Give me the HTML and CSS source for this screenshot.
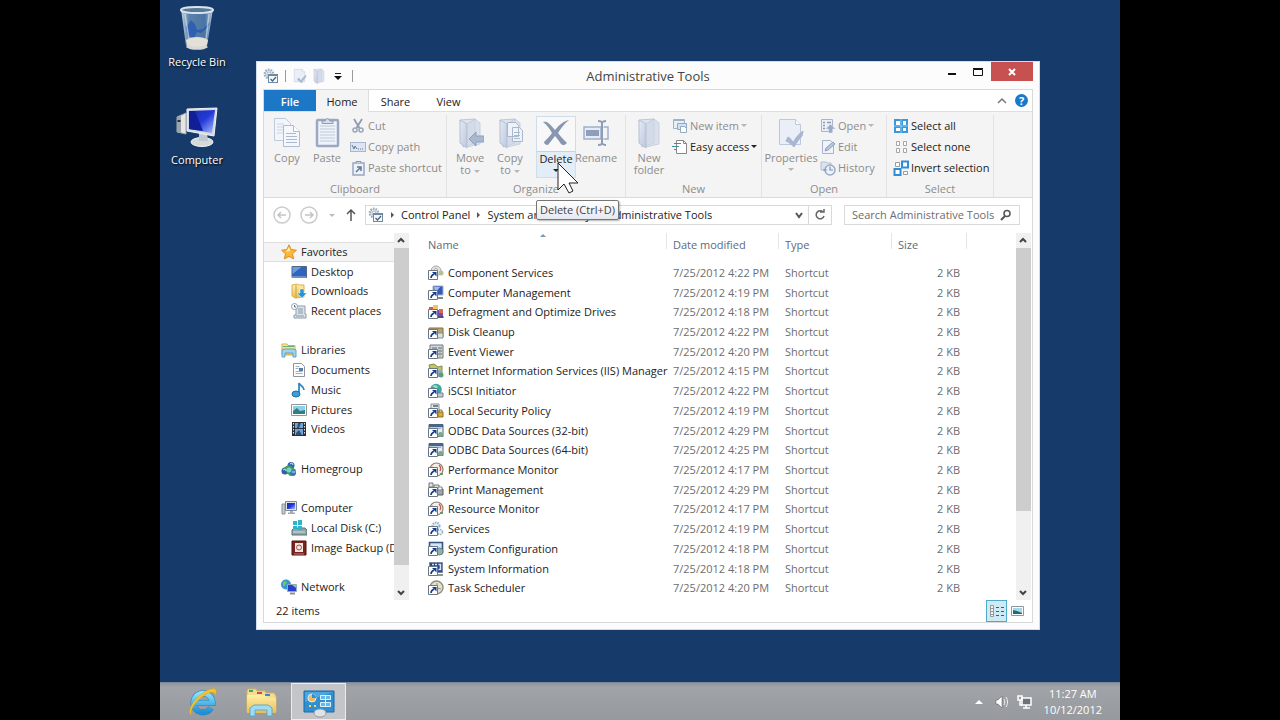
FILE: index.html
```html
<!DOCTYPE html>
<html lang="en">
<head>
    <meta charset="UTF-8">
    <meta name="viewport" content="width=device-width, initial-scale=1.0">
    <title>Administrative Tools</title>
    <link rel="stylesheet" href="styles.css">
</head>
<body>
    <!-- Icon sprite -->
    <svg class="sprite" aria-hidden="true">
        <defs>
            <linearGradient id="gFolder" x1="0" y1="0" x2="1" y2="1"><stop offset="0" stop-color="#e6ebf4"/><stop offset="1" stop-color="#bcc7dc"/></linearGradient>
            <linearGradient id="gBlue" x1="0" y1="0" x2="1" y2="1"><stop offset="0" stop-color="#1a2fa0"/><stop offset=".5" stop-color="#2438d8"/><stop offset="1" stop-color="#a9c4ff"/></linearGradient>
            <linearGradient id="gGlass" x1="0" y1="0" x2="1" y2="0"><stop offset="0" stop-color="#c4d4e2"/><stop offset=".25" stop-color="#5a82ab"/><stop offset=".75" stop-color="#4a74a3"/><stop offset="1" stop-color="#b5c9da"/></linearGradient>
            <linearGradient id="gGold" x1="0" y1="0" x2="0" y2="1"><stop offset="0" stop-color="#fff0a8"/><stop offset="1" stop-color="#e9bd50"/></linearGradient>
            <linearGradient id="gIe" x1="0" y1="0" x2="0" y2="1"><stop offset="0" stop-color="#8be0fb"/><stop offset="1" stop-color="#1f8fd8"/></linearGradient>
        </defs>

        <symbol id="gears" viewBox="0 0 16 16">
            <circle cx="6" cy="6" r="4.2" fill="#e8edf2" stroke="#9dacbb" stroke-width="2.4" stroke-dasharray="1.6 1"/>
            <circle cx="6" cy="6" r="2" fill="#fff" stroke="#a5b4c3"/>
            <rect x="5.500" y="6.500" width="9" height="8" fill="#f4f8fb" stroke="#7089a0"/>
            <path d="M5 7.500h10" stroke="#7089a0"/>
            <path d="M7.500 11l2 2 3.500-4" fill="none" stroke="#466681" stroke-width="1.300"/>
        </symbol>
        <symbol id="props" viewBox="0 0 28 32">
            <path d="M2.500 2.500h16l5 5v20h-21z" fill="#e9eef7" stroke="#bdc8da"/>
            <path d="M18.500 2.500v5h5" fill="#fff" stroke="#bdc8da"/>
            <path d="M11 20c2 1 4 3 5 6 3-6 6-9 10-12l-1 5c-3 3-6 7-8 11-2-2-5-5-8-6z" fill="#a9b8d2" stroke="#a3b3cf"/>
        </symbol>
        <symbol id="folder" viewBox="0 0 28 32">
            <path d="M4 3l15-1v24l-12 4z" fill="#dde4ef" stroke="#bcc7d9"/>
            <path d="M4 3l7 4v24l-7-5z" fill="url(#gFolder)" stroke="#b5c1d5"/>
            <path d="M19 2l5 4v21l-13 3V7z" fill="#cfd8e7" opacity=".7" stroke="#b8c3d6"/>
        </symbol>
        <symbol id="copy" viewBox="0 0 28 32">
            <path d="M1.500 1.500h11l5 5v17h-16z" fill="#f2f5fa" stroke="#bfcadb"/>
            <path d="M4 7h7M4 10h7M4 13h7M4 16h7" stroke="#cbd4e3"/>
            <path d="M10.500 8.500h10l6 6v15h-16z" fill="#f4f7fb" stroke="#aebcd1"/>
            <path d="M20.500 8.500v6h6" fill="#fff" stroke="#aebcd1"/>
            <path d="M13 16.500h10M13 19.500h11M13 22.500h11M13 25.500h11" stroke="#aab8d2"/>
        </symbol>
        <symbol id="paste" viewBox="0 0 28 32">
            <rect x="4" y="3" width="21" height="26" rx="1" fill="#eff3f9" stroke="#99a9c4" stroke-width="2.500"/>
            <path d="M7 9h15M7 12h15M7 15h15M7 18h15M7 21h15M7 24h15" stroke="#bdc9db"/>
            <path d="M9 6.500V4h3l2.500-3L17 4h3v2.500z" fill="#d7deea" stroke="#8d9db7"/>
        </symbol>
        <symbol id="cut" viewBox="0 0 16 16">
            <path d="M4 1l5.500 9M12 1L6.500 10" stroke="#8f9bb0" stroke-width="1.800"/>
            <circle cx="5" cy="12" r="2" fill="none" stroke="#98a4b8" stroke-width="1.500"/>
            <circle cx="11" cy="12" r="2" fill="none" stroke="#98a4b8" stroke-width="1.500"/>
        </symbol>
        <symbol id="path" viewBox="0 0 16 16">
            <rect x=".5" y="3.500" width="15" height="9" fill="#dce5f1" stroke="#a9b7cd"/>
            <path d="M2 6l2 4 1-3 2 3M8 10h1M10 10h1M12 10h1" fill="none" stroke="#677a9c"/>
        </symbol>
        <symbol id="pasteshort" viewBox="0 0 16 16">
            <rect x="3" y="3" width="11" height="12" fill="#eef2f8" stroke="#97a7c2" stroke-width="1.500"/>
            <path d="M6 3V1.500h5V3" fill="#cdd6e4" stroke="#8797b2"/>
            <path d="M6 12l4-4M7 7h4v4" fill="none" stroke="#5f7598" stroke-width="1.500"/>
        </symbol>
        <symbol id="moveto" viewBox="0 0 28 32">
            <use href="#folder"/>
            <path d="M13 22l7-7v4h8v6h-8v4z" fill="#a9b7cf" stroke="#8fa0bd"/>
        </symbol>
        <symbol id="copyto" viewBox="0 0 28 32">
            <use href="#folder"/>
            <path d="M11.500 5.500h8l3 3v11h-11zM16.500 10.500h7l3 3v11h-10z" fill="#eff3f9" stroke="#a9b7cf"/>
            <path d="M18 15.500h6M18 18.500h6M18 21.500h6" stroke="#a9b7cf"/>
        </symbol>
        <symbol id="delete" viewBox="0 0 28 32">
            <path d="M1 5c4-1 6 1 12 8C18 7 22 4 27 3c-5 4-8 8-11 13 4 5 7 8 9 10-2 2-4 3-6 1-2-3-4-6-6-8-3 4-5 6-7 9-2 0-4-1-4-3 3-3 6-6 8-9C7 11 5 8 1 5z" fill="#8797b2"/>
        </symbol>
        <symbol id="rename" viewBox="0 0 28 32">
            <path d="M2 10h17v12H2z" fill="#e6ecf5" stroke="#9fb0c9" stroke-width="1.500"/>
            <path d="M4 13h13v6H4z" fill="#8d9fbd"/>
            <path d="M21.500 10h4.500v12h-4.500" fill="none" stroke="#9fb0c9" stroke-width="1.500"/>
            <path d="M16 4c3 0 4 1 4 2 0-1 2-2 4-2M20 5v22M16 28c3 0 4-1 4-2 0 1 2 2 4 2" fill="none" stroke="#8d9db8" stroke-width="2"/>
        </symbol>
        <symbol id="newitem" viewBox="0 0 16 16">
            <path d="M1.500 1.500h11v9h-11z" fill="#e6f0f8" stroke="#9bb3cc"/><path d="M1 2.500h11" stroke="#9bb3cc"/>
            <path d="M5.500 5.500h9v6h-9z" fill="#d4e2ef" stroke="#8fa9c4"/>
            <path d="M8.500 8.500h4l2 2v4h-6z" fill="#fff" stroke="#93a9c2"/>
        </symbol>
        <symbol id="easy" viewBox="0 0 16 16">
            <path d="M4.500 1.500h7l3 3v10h-10z" fill="#fff" stroke="#888"/><path d="M11.500 1.500v3h3" fill="none" stroke="#888"/>
            <path d="M2 4.500h7M0 7.500h7M2 10.500h3" stroke="#3f8f9d" stroke-width="1.200"/>
        </symbol>
        <symbol id="open" viewBox="0 0 16 16">
            <path d="M1.500 1.500h11v12h-11z" fill="#eef2f8" stroke="#a7b4cb"/>
            <path d="M3 4.500h2M3 7.500h2M3 10.500h2M7 4.500h4" stroke="#8b9bb9" stroke-width="1.500"/>
            <path d="M10.500 6l5 5h-3v4H8.500v-4h-3z" fill="#9babc7" stroke="#e8edf5" stroke-width=".5"/>
        </symbol>
        <symbol id="edit" viewBox="0 0 16 16">
            <path d="M2.500 1.500h8l3 3v10h-11z" fill="#f0f4fa" stroke="#a7b4cb"/>
            <path d="M5 12l1-3 7-6 2 2-7 6z" fill="#b8c6dc" stroke="#8fa0bf"/>
        </symbol>
        <symbol id="history" viewBox="0 0 16 16">
            <path d="M1 2h5l1 1h4v7H1z" fill="#dbe3ef" stroke="#b3c0d5"/>
            <circle cx="10" cy="10" r="5" fill="#eef2f8" stroke="#9aabc7" stroke-width="1.500"/>
            <path d="M10 6.500V10h3M3 10h4" fill="none" stroke="#7c8fb0" stroke-width="1.200"/>
        </symbol>
        <symbol id="selall" viewBox="0 0 16 16">
            <path d="M1 1h14v14H1z" fill="#3b97dc"/><path d="M8 1v14M1 8h14" stroke="#8cc5ef"/>
            <path d="M3 3h4v4H3zM10 3h3v4h-3zM3 10h4v3H3zM10 10h3v3h-3z" fill="#fff"/>
        </symbol>
        <symbol id="selnone" viewBox="0 0 16 16">
            <path d="M3.500 2.500h3v4h-3zM10.500 2.500h3v4h-3zM3.500 9.500h3v4h-3zM10.500 9.500h3v4h-3z" fill="#fff" stroke="#a5a5a5"/>
        </symbol>
        <symbol id="selinv" viewBox="0 0 16 16">
            <path d="M2.500 2.500h4v4h-4zM10.500 11.500h4v3h-4z" fill="#fff" stroke="#9a9a9a"/>
            <path d="M9 1.500h6v6H9zM1.500 9h6v6h-6z" fill="#fff" stroke="#2f8ed6" stroke-width="2"/>
        </symbol>

        <symbol id="star" viewBox="0 0 16 16"><path d="M8 .8l2.200 4.800 5.200.6-3.900 3.500 1.100 5.200L8 12.300l-4.600 2.600 1.100-5.200L.6 6.200l5.200-.6z" fill="#fbb83a" stroke="#dd8d1d"/><path d="M8 3l1.200 3.600L5 8z" fill="#fff2b8"/></symbol>
        <symbol id="desk" viewBox="0 0 16 16"><path d="M1 2.500h14.500v11H1z" fill="#2f65bd" stroke="#54657d"/><path d="M1.500 3h9L1.500 10z" fill="#6d9ce0"/><path d="M1 13h14" stroke="#a8b9cc"/></symbol>
        <symbol id="down" viewBox="0 0 16 16"><path d="M1 2l5-1 2 1h5v12l-9 1-3-2z" fill="url(#gGold)" stroke="#d8b153"/><path d="M5 2v13" stroke="#caa24a"/><path d="M9 6h4v4h3l-5 5-5-5h3z" fill="#2a93dc" stroke="#fff" stroke-width=".5"/></symbol>
        <symbol id="recent" viewBox="0 0 16 16"><path d="M5 3h9v8h1v4H3v-3h2z" fill="#dce4ea" stroke="#8d9ba7"/><path d="M7 6h5M7 8h5M7 10h5M5 13h8" stroke="#8498a8"/><circle cx="3.500" cy="3.500" r="3" fill="#fff" stroke="#90a0ac"/><path d="M3.500 2v2h1.500" fill="none" stroke="#5d7080"/></symbol>
        <symbol id="lib" viewBox="0 0 16 16"><path d="M1 2h5l1 1.500h7V13H1z" fill="url(#gGold)" stroke="#d3ae57"/><path d="M2 4.500h11" stroke="#68b06a"/><path d="M1 15V8l3-1h8l3 1v7h-3v-4H4v4z" fill="#9fd3ee" stroke="#5ca5c8"/></symbol>
        <symbol id="doc" viewBox="0 0 16 16"><path d="M2.500 1.500h8l3 3v10h-11z" fill="#fff" stroke="#8e959c"/><path d="M4.500 4.500h4M4.500 6.500h3M4.500 9.500h7M4.500 11.500h7" stroke="#9cb0c4"/><path d="M8 6h4v3H8z" fill="#547da8"/></symbol>
        <symbol id="music" viewBox="0 0 16 16"><path d="M8 12V1c1 3 5 3 5 7" fill="none" stroke="#2d8bc4" stroke-width="1.800"/><ellipse cx="5" cy="12" rx="4" ry="3" fill="#3a9fd8" stroke="#1f6fa5"/></symbol>
        <symbol id="pic" viewBox="0 0 16 16"><path d="M.5 2.500h15v11H.5z" fill="#fff" stroke="#8e979e"/><path d="M2 4h12v8H2z" fill="#8fd0e6"/><path d="M2 9l4-3 3 3 5-1v4H2z" fill="#2c7f86"/></symbol>
        <symbol id="video" viewBox="0 0 16 16"><path d="M1 1h14v14H1z" fill="#2a3036"/><path d="M4 2h8v5H4zM4 8h8v6H4z" fill="#6ea6dd"/><path d="M7 2h3l-2 5H6zM5 12l3-3 3 5H5z" fill="#34526f"/><path d="M2.500 2v12M13.500 2v12" stroke="#e4e4e4" stroke-dasharray="1.500 1.500"/></symbol>
        <symbol id="home" viewBox="0 0 16 16"><circle cx="4" cy="10" r="3.500" fill="#2d5fae"/><circle cx="10" cy="4.500" r="3.500" fill="#2f66b4"/><path d="M3 7c3-3 5-3 8-1l4 3-2 5-4 1-3-3z" fill="#3f9e57"/><circle cx="12" cy="12" r="3" fill="#3578b5"/><circle cx="8" cy="9" r="2.500" fill="#74d3cf"/><path d="M9 3l2-1 1 2M2 9l2-1 1 2M11 11h3" fill="none" stroke="#bfe4f0"/></symbol>
        <symbol id="pc" viewBox="0 0 16 16"><path d="M1 4h3v10H1z" fill="#c5ccd3" stroke="#88929b"/><path d="M4.500 1.500h11v9h-11z" fill="#dfe4ea" stroke="#7f8a96"/><path d="M6 3h8v6H6z" fill="url(#gBlue)"/><path d="M9 11h3v1.500H14V14H7v-1.500h2z" fill="#a4adb6"/></symbol>
        <symbol id="disk" viewBox="0 0 16 16"><path d="M1 10l2-2h11l2 2v5H1z" fill="#8fa4a8" stroke="#5e7377"/><path d="M2 12h12" stroke="#d4e1e3"/><path d="M13 13h2" stroke="#42e35c"/><path d="M2 1h4v4H2zM7 0h4v5H7zM2 6h4v3H2zM7 6h4v4H7z" fill="#27b5cf"/></symbol>
        <symbol id="image" viewBox="0 0 16 16"><path d="M1 1h14v14H1z" fill="#7a2420" stroke="#51120f"/><path d="M4 3h8v9H4z" fill="#f7e5df"/><circle cx="8" cy="7.500" r="2.500" fill="none" stroke="#a44e45"/><path d="M3 14h10" stroke="#c27b73"/></symbol>
        <symbol id="net" viewBox="0 0 16 16"><circle cx="5" cy="5.500" r="5" fill="#3498cf"/><path d="M2 3c3-2 5 0 3 2s-1 3-3 2z" fill="#6cc56f"/><path d="M6.500 5.500h9v7h-9z" fill="#2540c9" stroke="#9da8b6"/><path d="M11 6h4v3z" fill="#8ab1ff"/><path d="M9 14.500h5" stroke="#87919b" stroke-width="2"/></symbol>

        <!-- Shortcut arrow laid over every tool icon -->
        <symbol id="arrow" viewBox="0 0 16 16">
            <path d="M.5 5.500h9v9h-9z" fill="#fff" stroke="#6c7680"/>
            <path d="M3 13c0-2 1-3 3-4" fill="none" stroke="#173c8c" stroke-width="1.600"/>
            <path d="M4 7h4.500v4.500z" fill="#173c8c"/>
        </symbol>
        <symbol id="t-comp" viewBox="0 0 16 16"><circle cx="8" cy="6" r="5" fill="#e4e4dc" stroke="#a5a9a5"/><circle cx="8" cy="5" r="1.500" fill="#fff" stroke="#aaa"/><circle cx="13" cy="8" r="2.500" fill="#b4c096"/><use href="#arrow"/></symbol>
        <symbol id="t-mgmt" viewBox="0 0 16 16"><path d="M5 1h10v9H5z" fill="#3558bd" stroke="#a3b2cf"/><path d="M6 2h6L7 8z" fill="#9dbbf4"/><path d="M9 13h6" stroke="#7d8996" stroke-width="2"/><use href="#arrow"/></symbol>
        <symbol id="t-defrag" viewBox="0 0 16 16"><path d="M1 3h5v4H1z" fill="#d95745"/><path d="M5 1h5v5H5z" fill="#f1c55b"/><path d="M8 6h7v8H8z" fill="#7250a4"/><path d="M11 5h4v4h-4z" fill="#d96956"/><path d="M10 13h6" stroke="#444"/><use href="#arrow"/></symbol>
        <symbol id="t-clean" viewBox="0 0 16 16"><path d="M1 4h14v9H1z" fill="#b9a369" stroke="#837143"/><path d="M9 9h6v5H9z" fill="#dbe1de" stroke="#7f9386"/><use href="#arrow"/></symbol>
        <symbol id="t-event" viewBox="0 0 16 16"><path d="M2 1h13v13H2z" fill="#d3d8dc" stroke="#6c7884"/><path d="M4 4h5M10 4h4M10 7h4M10 10h4" stroke="#456d91"/><path d="M12 3v10" stroke="#b19d67"/><use href="#arrow"/></symbol>
        <symbol id="t-iis" viewBox="0 0 16 16"><path d="M1 2l5-1 4 3 4-1v10H4z" fill="#c4c65d" stroke="#858d49"/><path d="M9 7h5v7H9z" fill="#93abc2"/><circle cx="13" cy="12" r="2.500" fill="#5a9f6f"/><use href="#arrow"/></symbol>
        <symbol id="t-iscsi" viewBox="0 0 16 16"><circle cx="8" cy="6.500" r="5.800" fill="#3da6a6"/><path d="M4 3c4-2 7 0 5 3z" fill="#9de2b0"/><path d="M9 10h6v4H9z" fill="#c0c9cc" stroke="#718189"/><use href="#arrow"/></symbol>
        <symbol id="t-sec" viewBox="0 0 16 16"><path d="M3 1h8v12H3z" fill="#e5e9ed" stroke="#85919c"/><path d="M5 3h5" stroke="#51606f" stroke-width="1.500"/><path d="M10 9h5v5h-5z" fill="#d9ad37" stroke="#93701e"/><path d="M11 9V7h3v2" fill="none" stroke="#83735b"/><use href="#arrow"/></symbol>
        <symbol id="t-odbc" viewBox="0 0 16 16"><path d="M1 1.500h14v12H1z" fill="#e7edf2" stroke="#536579"/><path d="M1 3h14" stroke="#43678e" stroke-width="2.500"/><path d="M4 5.500h9" stroke="#9db1c2"/><circle cx="12.500" cy="11.500" r="2.500" fill="#77a888"/><use href="#arrow"/></symbol>
        <symbol id="t-perf" viewBox="0 0 16 16"><circle cx="8.500" cy="7.500" r="6.500" fill="#f6eee9" stroke="#89826f" stroke-width="1.200"/><path d="M4 5l5 4M11 3c2 2 2 4 1 6" fill="none" stroke="#cf5549" stroke-width="1.300"/><path d="M12 12h3" stroke="#669a6b" stroke-width="2"/><use href="#arrow"/></symbol>
        <symbol id="t-print" viewBox="0 0 16 16"><path d="M1 1h4v4H1zM6 3h5v4H6z" fill="#dfe3e6" stroke="#71787d"/><path d="M7 7h8v6H7z" fill="#9ca8ab" stroke="#545e62"/><path d="M10 5h4v3h-4z" fill="#fff" stroke="#7a8485"/><use href="#arrow"/></symbol>
        <symbol id="t-serv" viewBox="0 0 16 16"><circle cx="8" cy="5" r="3.500" fill="#dfeef8" stroke="#8db1ca" stroke-width="2" stroke-dasharray="1.500 1"/><circle cx="12" cy="11" r="2.500" fill="#e9f3f9" stroke="#8fa9bb" stroke-width="1.600" stroke-dasharray="1.300 1"/><use href="#arrow"/></symbol>
        <symbol id="t-conf" viewBox="0 0 16 16"><path d="M1.500 1.500h13v10h-13z" fill="#d1e4fa" stroke="#35547f" stroke-width="1.600"/><circle cx="11.500" cy="10.500" r="3.500" fill="#94b698" stroke="#5f7d8f"/><use href="#arrow"/></symbol>
        <symbol id="t-info" viewBox="0 0 16 16"><path d="M1.500 1.500h13v10h-13z" fill="#24469b" stroke="#7c8797"/><path d="M4 3.500h2M7 3.500h2M10.500 3.500h2v5h-2" fill="none" stroke="#d6e4ff" stroke-width="1.500"/><path d="M9 14h6" stroke="#8b949d" stroke-width="2"/><use href="#arrow"/></symbol>
        <symbol id="t-task" viewBox="0 0 16 16"><circle cx="8.500" cy="7.500" r="6.500" fill="#e8e1ca" stroke="#8b8e83" stroke-width="1.400"/><path d="M9 3v5l4 1" fill="none" stroke="#89958f"/><use href="#arrow"/></symbol>
    </svg>

    <div class="desktop">
        <div class="shortcuts">
            <a href="#" class="shortcut">
                <svg viewBox="0 0 40 48" width="40" height="48">
                    <path d="M4 4l5 37c1 3 19 3 21 0l6-37z" fill="url(#gGlass)"/>
                    <path d="M9 22l5-7 4 4 2 6 6-1 7-7-2 5-7 6-4-1-3 6-6-2z" fill="#2456b4" opacity=".75"/>
                    <path d="M9 35c5-4 17-4 22 0l-1 5c-4 3-16 3-20 0z" fill="#e4dfd7"/>
                    <ellipse cx="20" cy="5" rx="16" ry="3" fill="#567899" stroke="#dbe4eb" stroke-width="2"/>
                    <path d="M10 41c4 3 16 3 20 0" stroke="#d5d9db" stroke-width="3" fill="none"/>
                    <path d="M8 9l4 25M32 9l-3 25" stroke="#dce9f3" stroke-width="1.500" opacity=".6"/>
                </svg>
                <span>Recycle Bin</span>
            </a>
            <a href="#" class="shortcut">
                <svg viewBox="0 0 48 48" width="48" height="48">
                    <path d="M4 14l9-4v21l-9-2z" fill="#e5e6e4" stroke="#a4a8aa"/>
                    <path d="M4 14l4-1v17l-4-1z" fill="#9ba3ab"/><path d="M4.500 18h3" stroke="#27333c" stroke-width="2"/>
                    <ellipse cx="29" cy="39" rx="11" ry="4.500" fill="#d4d9dc" stroke="#f5f5f5"/>
                    <path d="M26 30h8l1 8h-9z" fill="#c0c8cf"/>
                    <path d="M14 6l30-1-3 28-27-5z" fill="#d3dae1" stroke="#f0f3f5"/>
                    <path d="M16 8l26-1-3 23-23-4z" fill="url(#gBlue)"/>
                    <path d="M16 8h6l8 20-14-2z" fill="#101e98"/>
                </svg>
                <span>Computer</span>
            </a>
        </div>

        <div class="window">
            <header class="titlebar">
                <div class="quick-access">
                    <svg class="icon"><use href="#gears"/></svg>
                    <i class="divider"></i>
                    <button class="icon-btn" aria-label="Properties"><svg class="icon"><use href="#props"/></svg></button>
                    <button class="icon-btn" aria-label="New folder"><svg class="icon"><use href="#folder"/></svg></button>
                    <button class="icon-btn" aria-label="Customize toolbar"><svg width="8" height="8" viewBox="0 0 8 8"><path d="M1 1.500h6" stroke="#222"/><path d="M0 4h8L4 8z" fill="#111"/></svg></button>
                    <i class="divider"></i>
                </div>
                <h1>Administrative Tools</h1>
                <div class="window-controls">
                    <button class="win-btn" aria-label="Minimize"><svg width="10" height="10"><path d="M1 7h8" stroke="#111" stroke-width="2"/></svg></button>
                    <button class="win-btn" aria-label="Maximize"><svg width="10" height="10"><path d="M.5 2.500h9v6h-9zM0 1.500h10" fill="none" stroke="#111"/></svg></button>
                    <button class="win-btn close" aria-label="Close"><svg width="10" height="10"><path d="M2 2l6 6M8 2L2 8" stroke="#fff" stroke-width="2"/></svg></button>
                </div>
            </header>

            <div class="frame">
                <nav class="tabs">
                    <button class="tab file">File</button>
                    <button class="tab active">Home</button>
                    <button class="tab">Share</button>
                    <button class="tab">View</button>
                    <div class="tabs-right">
                        <button class="icon-btn" aria-label="Minimize the ribbon"><svg width="10" height="10"><path d="M1 7l4-4 4 4" fill="none" stroke="#777" stroke-width="1.500"/></svg></button>
                        <button class="help" aria-label="Help">?</button>
                    </div>
                </nav>

                <div class="ribbon">
                    <section class="group clipboard">
                        <div class="group-body">
                            <button class="big"><svg><use href="#copy"/></svg>Copy</button>
                            <button class="big"><svg><use href="#paste"/></svg>Paste</button>
                            <div class="stack">
                                <button class="small"><svg class="icon"><use href="#cut"/></svg>Cut</button>
                                <button class="small"><svg class="icon"><use href="#path"/></svg>Copy path</button>
                                <button class="small"><svg class="icon"><use href="#pasteshort"/></svg>Paste shortcut</button>
                            </div>
                        </div>
                        <h2>Clipboard</h2>
                    </section>
                    <section class="group organize">
                        <div class="group-body">
                            <button class="big"><svg><use href="#moveto"/></svg>Move<span>to <i class="caret"></i></span></button>
                            <button class="big"><svg><use href="#copyto"/></svg>Copy<span>to <i class="caret"></i></span></button>
                            <div class="split">
                                <button class="split-top" aria-label="Delete"><svg><use href="#delete"/></svg></button>
                                <button class="split-menu">Delete<i class="caret"></i></button>
                                <div class="tooltip">Delete (Ctrl+D)</div>
                                <svg class="cursor" width="22" height="32" viewBox="0 0 22 32"><path d="M1 1v27l6-6 5 9 4-2-4-8h9z" fill="#fff" stroke="#222"/></svg>
                            </div>
                            <button class="big"><svg><use href="#rename"/></svg>Rename</button>
                        </div>
                        <h2>Organize</h2>
                    </section>
                    <section class="group new">
                        <div class="group-body">
                            <button class="big"><svg><use href="#folder"/></svg>New<span>folder</span></button>
                            <div class="stack">
                                <button class="small"><svg class="icon"><use href="#newitem"/></svg>New item<i class="caret"></i></button>
                                <button class="small enabled"><svg class="icon"><use href="#easy"/></svg>Easy access<i class="caret"></i></button>
                            </div>
                        </div>
                        <h2>New</h2>
                    </section>
                    <section class="group open">
                        <div class="group-body">
                            <button class="big wide"><svg><use href="#props"/></svg>Properties<i class="caret"></i></button>
                            <div class="stack">
                                <button class="small"><svg class="icon"><use href="#open"/></svg>Open<i class="caret"></i></button>
                                <button class="small"><svg class="icon"><use href="#edit"/></svg>Edit</button>
                                <button class="small"><svg class="icon"><use href="#history"/></svg>History</button>
                            </div>
                        </div>
                        <h2>Open</h2>
                    </section>
                    <section class="group select">
                        <div class="group-body">
                            <div class="stack">
                                <button class="small enabled"><svg class="icon"><use href="#selall"/></svg>Select all</button>
                                <button class="small enabled"><svg class="icon"><use href="#selnone"/></svg>Select none</button>
                                <button class="small enabled"><svg class="icon"><use href="#selinv"/></svg>Invert selection</button>
                            </div>
                        </div>
                        <h2>Select</h2>
                    </section>
                </div>

                <div class="address-row">
                    <button class="icon-btn" aria-label="Back"><svg width="18" height="18"><circle cx="9" cy="9" r="8" fill="#fff" stroke="#cbcbcb" stroke-width="1.500"/><path d="M13 9H5M8 6L5 9l3 3" fill="none" stroke="#c4c4c4" stroke-width="1.500"/></svg></button>
                    <button class="icon-btn" aria-label="Forward"><svg width="18" height="18"><circle cx="9" cy="9" r="8" fill="#fff" stroke="#cbcbcb" stroke-width="1.500"/><path d="M5 9h8M10 6l3 3-3 3" fill="none" stroke="#c4c4c4" stroke-width="1.500"/></svg></button>
                    <button class="icon-btn" aria-label="Recent locations"><i class="caret"></i></button>
                    <button class="icon-btn" aria-label="Up"><svg width="10" height="14"><path d="M5 13V2M1 6l4-4 4 4" fill="none" stroke="#555" stroke-width="1.500"/></svg></button>
                    <div class="address">
                        <svg class="icon"><use href="#gears"/></svg>
                        <i class="chevron"></i><a href="#">Control Panel</a>
                        <i class="chevron"></i><a href="#">System and Security</a>
                        <i class="chevron"></i><a href="#">Administrative Tools</a>
                        <button class="icon-btn history" aria-label="Previous locations"><svg width="10" height="10"><path d="M2 3l3 4 3-4" fill="none" stroke="#555" stroke-width="2"/></svg></button>
                        <button class="icon-btn refresh" aria-label="Refresh"><svg width="12" height="12"><path d="M9 3a4 4 0 1 0 1 4M6 3h4V0" fill="none" stroke="#666" stroke-width="1.500"/></svg></button>
                    </div>
                    <div class="search">
                        <input type="text" placeholder="Search Administrative Tools" aria-label="Search Administrative Tools">
                        <svg width="12" height="12"><circle cx="7" cy="4.500" r="3" fill="none" stroke="#555" stroke-width="1.500"/><path d="M5 7l-4 4" stroke="#555" stroke-width="2"/></svg>
                    </div>
                </div>

                <div class="panes">
                    <aside class="nav-pane">
                        <ul>
                            <li class="root selected"><a href="#"><svg class="icon"><use href="#star"/></svg>Favorites</a></li>
                            <li><a href="#"><svg class="icon"><use href="#desk"/></svg>Desktop</a></li>
                            <li><a href="#"><svg class="icon"><use href="#down"/></svg>Downloads</a></li>
                            <li><a href="#"><svg class="icon"><use href="#recent"/></svg>Recent places</a></li>
                            <li class="spacer"></li>
                            <li class="root"><a href="#"><svg class="icon"><use href="#lib"/></svg>Libraries</a></li>
                            <li><a href="#"><svg class="icon"><use href="#doc"/></svg>Documents</a></li>
                            <li><a href="#"><svg class="icon"><use href="#music"/></svg>Music</a></li>
                            <li><a href="#"><svg class="icon"><use href="#pic"/></svg>Pictures</a></li>
                            <li><a href="#"><svg class="icon"><use href="#video"/></svg>Videos</a></li>
                            <li class="spacer"></li>
                            <li class="root"><a href="#"><svg class="icon"><use href="#home"/></svg>Homegroup</a></li>
                            <li class="spacer"></li>
                            <li class="root"><a href="#"><svg class="icon"><use href="#pc"/></svg>Computer</a></li>
                            <li><a href="#"><svg class="icon"><use href="#disk"/></svg>Local Disk (C:)</a></li>
                            <li><a href="#"><svg class="icon"><use href="#image"/></svg>Image Backup (D:)</a></li>
                            <li class="spacer"></li>
                            <li class="root"><a href="#"><svg class="icon"><use href="#net"/></svg>Network</a></li>
                        </ul>
                        <div class="scrollbar">
                            <svg width="15" height="15"><path d="M4 9l3-3 3 3" fill="none" stroke="#444" stroke-width="2"/></svg>
                            <div class="track"><div class="thumb nav-thumb"></div></div>
                            <svg width="15" height="15"><path d="M4 6l3 3 3-3" fill="none" stroke="#444" stroke-width="2"/></svg>
                        </div>
                    </aside>

                    <main class="files">
                        <div class="list">
                            <table>
                                <colgroup><col class="c-name"><col class="c-date"><col class="c-type"><col class="c-size"><col></colgroup>
                                <thead>
                                    <tr><th class="sorted">Name</th><th>Date modified</th><th>Type</th><th>Size</th><th></th></tr>
                                </thead>
                                <tbody>
                                    <tr><td><svg class="icon"><use href="#t-comp"/></svg>Component Services</td><td>7/25/2012 4:22 PM</td><td>Shortcut</td><td>2 KB</td><td></td></tr>
                                    <tr><td><svg class="icon"><use href="#t-mgmt"/></svg>Computer Management</td><td>7/25/2012 4:19 PM</td><td>Shortcut</td><td>2 KB</td><td></td></tr>
                                    <tr><td><svg class="icon"><use href="#t-defrag"/></svg>Defragment and Optimize Drives</td><td>7/25/2012 4:18 PM</td><td>Shortcut</td><td>2 KB</td><td></td></tr>
                                    <tr><td><svg class="icon"><use href="#t-clean"/></svg>Disk Cleanup</td><td>7/25/2012 4:22 PM</td><td>Shortcut</td><td>2 KB</td><td></td></tr>
                                    <tr><td><svg class="icon"><use href="#t-event"/></svg>Event Viewer</td><td>7/25/2012 4:20 PM</td><td>Shortcut</td><td>2 KB</td><td></td></tr>
                                    <tr><td><svg class="icon"><use href="#t-iis"/></svg>Internet Information Services (IIS) Manager</td><td>7/25/2012 4:15 PM</td><td>Shortcut</td><td>2 KB</td><td></td></tr>
                                    <tr><td><svg class="icon"><use href="#t-iscsi"/></svg>iSCSI Initiator</td><td>7/25/2012 4:22 PM</td><td>Shortcut</td><td>2 KB</td><td></td></tr>
                                    <tr><td><svg class="icon"><use href="#t-sec"/></svg>Local Security Policy</td><td>7/25/2012 4:19 PM</td><td>Shortcut</td><td>2 KB</td><td></td></tr>
                                    <tr><td><svg class="icon"><use href="#t-odbc"/></svg>ODBC Data Sources (32-bit)</td><td>7/25/2012 4:29 PM</td><td>Shortcut</td><td>2 KB</td><td></td></tr>
                                    <tr><td><svg class="icon"><use href="#t-odbc"/></svg>ODBC Data Sources (64-bit)</td><td>7/25/2012 4:25 PM</td><td>Shortcut</td><td>2 KB</td><td></td></tr>
                                    <tr><td><svg class="icon"><use href="#t-perf"/></svg>Performance Monitor</td><td>7/25/2012 4:17 PM</td><td>Shortcut</td><td>2 KB</td><td></td></tr>
                                    <tr><td><svg class="icon"><use href="#t-print"/></svg>Print Management</td><td>7/25/2012 4:29 PM</td><td>Shortcut</td><td>2 KB</td><td></td></tr>
                                    <tr><td><svg class="icon"><use href="#t-perf"/></svg>Resource Monitor</td><td>7/25/2012 4:17 PM</td><td>Shortcut</td><td>2 KB</td><td></td></tr>
                                    <tr><td><svg class="icon"><use href="#t-serv"/></svg>Services</td><td>7/25/2012 4:19 PM</td><td>Shortcut</td><td>2 KB</td><td></td></tr>
                                    <tr><td><svg class="icon"><use href="#t-conf"/></svg>System Configuration</td><td>7/25/2012 4:18 PM</td><td>Shortcut</td><td>2 KB</td><td></td></tr>
                                    <tr><td><svg class="icon"><use href="#t-info"/></svg>System Information</td><td>7/25/2012 4:18 PM</td><td>Shortcut</td><td>2 KB</td><td></td></tr>
                                    <tr><td><svg class="icon"><use href="#t-task"/></svg>Task Scheduler</td><td>7/25/2012 4:20 PM</td><td>Shortcut</td><td>2 KB</td><td></td></tr>
                                    <tr><td><svg class="icon"><use href="#t-task"/></svg></td><td></td><td></td><td></td><td></td></tr>
                                </tbody>
                            </table>
                        </div>
                        <div class="scrollbar">
                            <svg width="15" height="15"><path d="M4 9l3-3 3 3" fill="none" stroke="#444" stroke-width="2"/></svg>
                            <div class="track"><div class="thumb list-thumb"></div></div>
                            <svg width="15" height="15"><path d="M4 6l3 3 3-3" fill="none" stroke="#444" stroke-width="2"/></svg>
                        </div>
                    </main>
                </div>

                <footer class="statusbar">
                    <span>22 items</span>
                    <div class="views">
                        <button class="view active" aria-label="Details"><svg width="16" height="14"><path d="M1.500 1.500h3v11h-3z" fill="#f5f5f5" stroke="#999"/><path d="M1 4.500h4M1 7.500h4M1 10.500h4" stroke="#999"/><path d="M7 3.500h3M12 3.500h3M7 7.500h3M12 7.500h3M7 11.500h3M12 11.500h3" stroke="#3b5c78"/></svg></button>
                        <button class="view" aria-label="Large icons"><svg width="13" height="12"><path d="M.5 1.500h12v9H.5z" fill="#fff" stroke="#8d989f"/><path d="M2 3h9v6H2z" fill="#a4d7ea"/><path d="M2 5l4 1 5 2v1H2z" fill="#1e6d75"/></svg></button>
                    </div>
                </footer>
            </div>
        </div>

        <div class="taskbar">
            <button class="task" aria-label="Internet Explorer">
                <svg viewBox="0 0 32 32" width="32" height="32">
                    <path d="M8 17h17.500A9.500 9.500 0 1 0 24 22" fill="none" stroke="#1f7fb8" stroke-width="6"/>
                    <path d="M8 17h17.500A9.500 9.500 0 1 0 24 22" fill="none" stroke="url(#gIe)" stroke-width="5"/>
                    <path d="M5 29C0 28 3 19 10 12 17 5 27 0 29 4c1 2 0 4-1 6 1-5-5-5-13 1C7 17 2 26 5 29z" fill="#f2c431" stroke="#cf9e1a" stroke-width=".5"/>
                </svg>
            </button>
            <button class="task" aria-label="File Explorer">
                <svg viewBox="0 0 32 32" width="32" height="32">
                    <path d="M2 5l1-2h8l1 2h8l1 2h8l2 3v16H2z" fill="#f4dc92" stroke="#d3b35e"/>
                    <path d="M2 9h18l2 3h9v15H2z" fill="url(#gGold)"/>
                    <path d="M4 4h4v2H4z" fill="#3ba85a"/><path d="M12 6h5v2h-5z" fill="#d74b3c"/><path d="M20 8h5v2h-5z" fill="#3f89c8"/>
                    <path d="M5 30V22l4-3h14l4 3v8h-5v-6H10v6z" fill="#9edcf5" stroke="#62a8ca"/>
                </svg>
            </button>
            <button class="task running" aria-label="Administrative Tools">
                <svg viewBox="0 0 32 32" width="32" height="32">
                    <path d="M1 5h30v21H1z" fill="#2f8fd0" stroke="#1a6ba6"/><path d="M2 6h28L2 16z" fill="#57b1e8" opacity=".7"/>
                    <circle cx="9" cy="12" r="4" fill="#f2b95b" stroke="#d5efff"/><path d="M9 12V8a4 4 0 0 1 4 4z" fill="#2f8fd0"/>
                    <path d="M17.500 9.500h10v4h-10zM17.500 16.500h10v4h-10z" fill="#63b9ea" stroke="#dff3ff"/><path d="M22.500 9v12" stroke="#dff3ff"/>
                    <path d="M6 20h2M11 20h2" stroke="#f1d565" stroke-width="2"/>
                    <ellipse cx="17" cy="27" rx="6" ry="4" fill="#dfe3e6" stroke="#959da3"/>
                </svg>
            </button>
            <div class="tray">
                <svg width="8" height="6"><path d="M0 5h8L4 1z" fill="#fff"/></svg>
                <svg width="14" height="14"><path d="M1 5h2l4-4v12L3 9H1z" fill="#fff" stroke="#555" stroke-width=".5"/><path d="M9 4c1 2 1 4 0 6M11 2c2 3 2 7 0 10" fill="none" stroke="#f4f4f4"/></svg>
                <svg width="16" height="16"><path d="M5 4h9v7H5z" fill="#6d7379" stroke="#fff" stroke-width="1.500"/><path d="M9 11v3M6 14h7M1 2h4v4H1zM3 6v5h2" fill="none" stroke="#fff" stroke-width="1.500"/></svg>
                <time><span>11:27 AM</span><span>10/12/2012</span></time>
            </div>
        </div>
    </div>
</body>
</html>
```
FILE: styles.css
```css
/* Base */
* {
    box-sizing: border-box;
}

body {
    margin: 0;
    height: 100vh;
    background: #000;
    font-family: "Open Sans", "Noto Sans", sans-serif;
    font-size: 11px;
    line-height: 16px;
    color: #222;
    overflow: hidden;
}

button {
    font: inherit;
    color: inherit;
    background: none;
    border: 0;
    padding: 0;
}

a {
    color: inherit;
    text-decoration: none;
}

h1, h2, ul {
    margin: 0;
    padding: 0;
    font-weight: normal;
}

svg {
    display: block;
    flex-shrink: 0;
}

.sprite {
    position: absolute;
    width: 0;
    height: 0;
}

.icon {
    width: 16px;
    height: 16px;
}

.icon-btn {
    display: flex;
    align-items: center;
    justify-content: center;
}

.caret {
    display: inline-block;
    border: 3px solid transparent;
    border-top-color: currentColor;
    border-bottom: 0;
    vertical-align: middle;
}

/* Desktop */
.desktop {
    position: relative;
    width: 75%;
    height: 100%;
    margin: 0 auto;
    background: #163a69;
    display: flex;
    flex-direction: column;
    justify-content: space-between;
}

.shortcuts {
    width: 74px;
    display: flex;
    flex-direction: column;
    gap: 33px;
    padding-top: 5px;
}

.shortcut {
    display: flex;
    flex-direction: column;
    align-items: center;
    height: 65px;
    justify-content: space-between;
    color: #fff;
    text-shadow: 1px 1px 2px #000;
}

/* Window */
.window {
    position: absolute;
    top: 61px;
    left: 96px;
    right: 80px;
    bottom: 90px;
    display: flex;
    flex-direction: column;
    padding: 0 6px 6px;
    background: #fcfcfc;
    border: 1px solid #cfdcec;
}

.titlebar {
    display: grid;
    grid-template-columns: 1fr auto 1fr;
    height: 27px;
    align-items: center;
}

.titlebar h1 {
    font-size: 13px;
    color: #444;
}

.quick-access {
    display: flex;
    align-items: center;
    gap: 3px;
}

.quick-access .icon-btn {
    min-width: 16px;
}

.divider {
    width: 1px;
    height: 12px;
    margin: 0 3px;
    background: #999;
}

.window-controls {
    display: flex;
    justify-content: flex-end;
    align-self: start;
}

.win-btn {
    width: 26px;
    height: 19px;
    display: flex;
    align-items: center;
    justify-content: center;
}

.win-btn.close {
    width: 42px;
    background: #c75050;
}

.frame {
    flex: 1;
    min-height: 0;
    display: flex;
    flex-direction: column;
    background: #fff;
    border: 1px solid #d9d9d9;
}

/* Tabs */
.tabs {
    display: flex;
    height: 22px;
    border-bottom: 1px solid #dedede;
}

.tab {
    width: 53px;
    height: 22px;
    padding-top: 2px;
}

.tab.file {
    width: 52px;
    height: 21px;
    background: #1c77c6;
    color: #fff;
    font-weight: 600;
}

.tab.active {
    background: #f4f4f4;
    border-right: 1px solid #dedede;
}

.tabs-right {
    display: flex;
    align-items: center;
    gap: 8px;
    margin-left: auto;
    padding-right: 4px;
}

.help {
    width: 13px;
    height: 13px;
    border-radius: 50%;
    background: #1979ca;
    color: #fff;
    font-weight: bold;
    line-height: 13px;
}

/* Ribbon */
.ribbon {
    display: flex;
    height: 86px;
    background: #f4f4f4;
    border-bottom: 1px solid #dadada;
    color: #8c8c8c;
}

.ribbon .caret {
    opacity: 0.6;
}

.group {
    display: flex;
    flex-direction: column;
    margin-top: 3px;
    border-right: 1px solid #e2e2e2;
}

.clipboard { width: 183px; }
.organize { width: 179px; }
.new { width: 136px; }
.open { width: 125px; }
.select { width: 107px; }

.group-body {
    display: flex;
    flex: 1;
    padding-left: 3px;
}

.group h2 {
    font-size: 11px;
    line-height: 16px;
    text-align: center;
}

.big {
    width: 40px;
    display: flex;
    flex-direction: column;
    align-items: center;
    justify-content: flex-start;
    line-height: 12px;
    padding-top: 2px;
}

.big svg,
.split-top svg {
    width: 28px;
    height: 32px;
    margin-bottom: 3px;
}

.big.wide {
    width: 52px;
}

.big > .caret {
    margin-top: 4px;
}

.stack {
    display: flex;
    flex-direction: column;
    padding-left: 3px;
}

.small {
    display: flex;
    align-items: center;
    gap: 2px;
    height: 21px;
    white-space: nowrap;
}

.ribbon .enabled,
.split-menu {
    color: #222;
}

.ribbon .enabled .caret,
.split-menu .caret {
    opacity: 1;
}

.split {
    position: relative;
    width: 40px;
    height: 62px;
    margin: 1px 0 0 6px;
    border: 1px solid #cfdcea;
    display: flex;
    flex-direction: column;
}

.split-top {
    height: 34px;
    padding-left: 5px;
    background: #f8f8f8;
}

.split-menu {
    flex: 1;
    display: flex;
    flex-direction: column;
    align-items: center;
    line-height: 14px;
    background: #e3edf7;
    border-top: 1px solid #bdd3e8;
}

.split-menu .caret {
    margin-top: 3px;
}

.tooltip {
    position: absolute;
    top: 83px;
    left: -1px;
    z-index: 2;
    padding: 1px 3px;
    white-space: nowrap;
    background: linear-gradient(#fff, #e6e8f1);
    border: 1px solid #767676;
    border-radius: 2px;
    color: #444;
    box-shadow: 1px 1px 2px rgba(0, 0, 0, 0.3);
}

.cursor {
    position: absolute;
    top: 45px;
    left: 20px;
    z-index: 3;
}

/* Address bar */
.address-row {
    display: flex;
    align-items: center;
    gap: 9px;
    height: 35px;
    padding: 0 12px 1px 9px;
    color: #222;
}

.address-row > .icon-btn > .caret {
    color: #bbb;
    margin: 0 2px;
}

.address {
    flex: 1;
    display: flex;
    align-items: center;
    height: 20px;
    padding-left: 2px;
    border: 1px solid #d9d9d9;
    white-space: nowrap;
}

.chevron {
    margin: 0 7px;
    border: 3px solid transparent;
    border-left-color: #555;
    border-right: 0;
}

.address .history {
    width: 18px;
    margin-left: auto;
}

.address .refresh {
    width: 23px;
    height: 18px;
    border-left: 1px solid #d9d9d9;
}

.search {
    display: flex;
    align-items: center;
    width: 176px;
    height: 20px;
    margin-left: 3px;
    padding: 0 7px;
    border: 1px solid #d9d9d9;
}

.search input {
    flex: 1;
    min-width: 0;
    padding: 0;
    border: 0;
    outline: 0;
    font: inherit;
}

.search input::placeholder {
    color: #6d6d6d;
}

/* Panes */
.panes {
    flex: 1;
    min-height: 0;
    display: flex;
}

.nav-pane {
    width: 145px;
    display: flex;
}

.nav-pane ul {
    flex: 1;
    min-width: 0;
    height: 355px;
    margin-top: 9px;
    display: grid;
    grid-auto-rows: 1fr;
    list-style: none;
    white-space: nowrap;
    overflow: hidden;
}

.nav-pane a {
    display: flex;
    align-items: center;
    gap: 4px;
    height: 100%;
    padding-left: 27px;
}

.nav-pane .root a {
    padding-left: 17px;
}

.nav-pane .selected {
    background: #f4f4f4;
    border: 1px solid #dedede;
    border-left: 0;
}

.scrollbar {
    width: 15px;
    display: flex;
    flex-direction: column;
    background: #f0f0f0;
}

.track {
    flex: 1;
}

.thumb {
    background: #cdcdcd;
}

.nav-thumb {
    height: 94%;
}

.list-thumb {
    height: 78%;
}

.files {
    flex: 1;
    min-width: 0;
    display: flex;
    padding: 0 1px 0 13px;
}

.list {
    flex: 1;
    overflow: hidden;
}

.list table {
    width: 100%;
    height: 385px;
    table-layout: fixed;
    border-collapse: collapse;
    white-space: nowrap;
}

.c-name { width: 245px; }
.c-date { width: 112px; }
.c-type { width: 113px; }
.c-size { width: 75px; }

.list th {
    height: 30px;
    padding: 0 6px 6px;
    text-align: left;
    font-weight: normal;
    color: #5c6b80;
    background: linear-gradient(#e5e5e5, #e5e5e5) right top / 1px 16px no-repeat;
}

.list th:last-child {
    background: none;
}

.list th.sorted {
    position: relative;
}

.sorted::after {
    content: "";
    position: absolute;
    top: 1px;
    left: 48%;
    border: 3px solid transparent;
    border-top: 0;
    border-bottom-color: #7b98b5;
}

.list td {
    padding: 0 6px;
    color: #6d6d6d;
}

.list td:first-child {
    color: #222;
}

.list td:nth-child(4) {
    padding-right: 7px;
    text-align: right;
}

.list td .icon {
    display: inline-block;
    vertical-align: -4px;
    margin-right: 4px;
}

/* Status bar */
.statusbar {
    display: flex;
    align-items: center;
    justify-content: space-between;
    height: 22px;
    padding: 0 4px 0 12px;
}

.views {
    display: flex;
}

.view {
    width: 21px;
    height: 22px;
    display: flex;
    align-items: center;
    justify-content: center;
}

.view.active {
    background: #cdeaf5;
    border: 1px solid #4fa9c8;
}

/* Taskbar */
.taskbar {
    display: flex;
    height: 38px;
    padding-left: 15px;
    background: linear-gradient(#8f959c, #a0a3a7 4px, #96999e);
    border-top: 1px solid #79899c;
}

.task {
    width: 55px;
    display: flex;
    align-items: center;
    justify-content: center;
    margin-right: 3px;
}

.task.running {
    background: #c3c5c8;
    border: 1px solid #ececec;
}

.tray {
    display: flex;
    align-items: center;
    gap: 12px;
    margin-left: auto;
    padding-right: 18px;
    color: #fff;
}

.tray svg + svg {
    margin-right: -4px;
}

.tray time {
    display: flex;
    flex-direction: column;
    align-items: center;
    margin-left: 3px;
}
```
